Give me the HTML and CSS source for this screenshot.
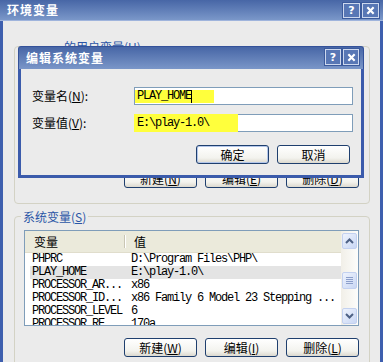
FILE: index.html
```html
<!DOCTYPE html>
<html lang="zh-CN">
<head>
<meta charset="utf-8">
<title>环境变量</title>
<link rel="stylesheet" href="styles.css">
</head>
<body>
<div class="win">
  <div class="titlebar">
    <span class="caption">环境变量</span>
    <div class="caps">
      <span class="cap">?</span>
      <span class="cap"><svg viewBox="0 0 10 10" width="9" height="9"><path d="M1.5 1.5 L8.5 8.5 M8.5 1.5 L1.5 8.5" stroke="#fff" stroke-width="2.4" fill="none"/></svg></span>
    </div>
  </div>
  <div class="client">
    <fieldset class="group user">
      <legend class="user-legend">的用户变量(<u>U</u>)</legend>
      <div class="gbody">
        <div class="ghost"></div>
        <div class="btnrow">
          <button class="btn">新建(<u>N</u>)</button>
          <button class="btn">编辑(<u>E</u>)</button>
          <button class="btn">删除(<u>D</u>)</button>
        </div>
      </div>
    </fieldset>
    <fieldset class="group sys">
      <legend>系统变量(<u>S</u>)</legend>
      <div class="gbody">
        <div class="listview">
          <div class="lv-main">
            <div class="lv-head">
              <span class="hc h1">变量</span>
              <span class="hdiv"></span>
              <span class="hc h2">值</span>
            </div>
            <div class="lv-row"><span class="c1">PHPRC</span><span class="c2">D:\Program Files\PHP\</span></div>
            <div class="lv-row sel"><span class="c1">PLAY_HOME</span><span class="c2">E:\play-1.0\</span></div>
            <div class="lv-row"><span class="c1">PROCESSOR_AR...</span><span class="c2">x86</span></div>
            <div class="lv-row"><span class="c1">PROCESSOR_ID...</span><span class="c2">x86 Family 6 Model 23 Stepping ...</span></div>
            <div class="lv-row"><span class="c1">PROCESSOR_LEVEL</span><span class="c2">6</span></div>
            <div class="lv-row"><span class="c1">PROCESSOR_RE...</span><span class="c2">170a</span></div>
          </div>
          <div class="vscroll">
            <span class="sbtn"><svg viewBox="0 0 9 6" width="9" height="6"><path d="M1 5 L4.5 1.5 L8 5" stroke="#4d6185" stroke-width="2" fill="none"/></svg></span>
            <span class="sthumb"><svg viewBox="0 0 7 8" width="7" height="8"><path d="M0 0.5H7M0 2.5H7M0 4.5H7M0 6.5H7" stroke="#8c9fcb" stroke-width="1"/></svg></span>
            <span class="sbtn down"><svg viewBox="0 0 9 6" width="9" height="6"><path d="M1 1 L4.5 4.5 L8 1" stroke="#4d6185" stroke-width="2" fill="none"/></svg></span>
          </div>
        </div>
        <div class="btnrow">
          <button class="btn">新建(<u>W</u>)</button>
          <button class="btn">编辑(<u>I</u>)</button>
          <button class="btn">删除(<u>L</u>)</button>
        </div>
      </div>
    </fieldset>
  </div>

  <div class="dialog">
    <div class="dlg-title">
      <span class="caption">编辑系统变量</span>
      <div class="caps dcaps">
        <span class="cap dcap">?</span>
        <span class="cap dcap"><svg viewBox="0 0 10 10" width="9" height="9"><path d="M1.5 1.5 L8.5 8.5 M8.5 1.5 L1.5 8.5" stroke="#fff" stroke-width="2.4" fill="none"/></svg></span>
      </div>
    </div>
    <div class="dlg-body">
      <div class="form">
        <label class="lbl">变量名(<u>N</u>):</label>
        <div class="field"><span class="mark m1">PLAY_HOME<span class="caret"></span></span></div>
        <label class="lbl">变量值(<u>V</u>):</label>
        <div class="field"><span class="mark m2">E:\play-1.0\</span></div>
      </div>
      <div class="btnrow dlg-btns">
        <button class="btn default">确定</button>
        <button class="btn">取消</button>
      </div>
    </div>
  </div>
</div>
</body>
</html>
```

FILE: styles.css
```css
* { box-sizing: border-box; }
html, body { margin: 0; padding: 0; }
body {
  width: 383px;
  height: 362px;
  overflow: hidden;
  background: #ebebeb;
  font-family: "Noto Sans CJK SC", sans-serif;
  font-size: 12px;
  color: #000;
}
u { text-decoration: underline; text-underline-offset: 1px; }

.win {
  position: relative;
  width: 383px;
  height: 362px;
  display: flex;
  flex-direction: column;
}

/* title bars */
.titlebar {
  height: 21px;
  flex: none;
  display: flex;
  align-items: center;
  justify-content: space-between;
  padding: 0 4px 0 7px;
  background: linear-gradient(#4766a6, #7a97c9);
  border-bottom: 1px solid #9fb4dc;
}
.caption {
  color: #fff;
  font-weight: bold;
  font-size: 12px;
  letter-spacing: 1px;
  line-height: 14px;
}
.caps { display: flex; gap: 2px; align-self: flex-start; padding-top: 3px; }
.cap {
  width: 17px;
  height: 15px;
  display: flex;
  align-items: center;
  justify-content: center;
  background: #5877b5;
  border: 1px solid #cdd8ee;
  box-shadow: 0 0 0 1px #3b5a9c;
  color: #fff;
  font-family: "DejaVu Sans", sans-serif;
  font-weight: bold;
  font-size: 11px;
  line-height: 1;
}

/* client area */
.client {
  flex: 1;
  background: #ebebeb;
  border-left: 3px solid #3e5fae;
  border-right: 3px solid #3e5fae;
  padding: 0 10px 0 11px;
}
.group {
  margin: 0;
  padding: 0;
  min-width: 0;
  border: 1px solid #d3d2c4;
  border-radius: 4px;
}
.group legend {
  margin-left: 6px;
  padding: 0 2px;
  line-height: 13px;
  font-size: 12px;
  color: #2a55a6;
}
.group.user { margin-top: 19px; }
.group.sys { margin-top: 6px; }
.group legend.user-legend { padding-left: 43px; }
.gbody { padding: 7px 10px 15px 9px; }
.ghost { height: 98px; }

.btnrow {
  display: flex;
  justify-content: flex-end;
  gap: 8px;
  margin-top: 11px;
}
.sys .btnrow { margin-top: 12px; }
.btn {
  width: 73px;
  height: 19px;
  padding: 0;
  border: 1px solid #1f3f6e;
  border-radius: 3px;
  background: linear-gradient(#ffffff, #f3f3ee 70%, #dcd9cf);
  font-family: "Noto Sans CJK SC", sans-serif;
  font-size: 12px;
  line-height: 15px;
  color: #000;
}
.btn.default {
  box-shadow: inset 0 0 0 1px #b3c6ea;
}

/* list view */
.listview {
  height: 96px;
  border: 1px solid #7f9db9;
  background: #fff;
  display: flex;
}
.lv-main { flex: 1; overflow: hidden; }
.lv-head {
  height: 22px;
  background: #ebeadb;
  border-bottom: 1px solid #e0ddcc;
  display: flex;
  align-items: center;
}
.hc { line-height: 13px; }
.h1 { width: 99px; padding-left: 9px; }
.hdiv {
  width: 1px;
  height: 13px;
  background: #c9c6b4;
  box-shadow: 1px 0 0 #fff;
}
.h2 { padding-left: 9px; }
.lv-row {
  height: 13px;
  margin-left: 5px;
  display: flex;
  font-family: "Liberation Mono", monospace;
  font-size: 12px;
  letter-spacing: -1.2px;
  line-height: 13px;
  white-space: pre;
}
.lv-row.sel { background: #e4e4e4; }
.c1 { width: 94px; padding-left: 2px; overflow: hidden; }
.c2 { padding-left: 7px; }

.vscroll {
  width: 17px;
  flex: none;
  background: linear-gradient(90deg, #f1efe8, #fdfdfb);
  display: flex;
  flex-direction: column;
  align-items: center;
  padding: 2px 0 1px;
}
.sbtn, .sthumb {
  width: 15px;
  height: 16px;
  border: 1px solid #c3d1f0;
  border-radius: 2px;
  background: linear-gradient(135deg, #eef3fd, #c9d7f4);
  display: flex;
  align-items: center;
  justify-content: center;
}
.sthumb { margin-top: 23px; height: 17px; }
.sbtn.down { margin-top: auto; }

/* dialog */
.dialog {
  position: absolute;
  left: 18px;
  top: 46px;
  width: 346px;
  height: 132px;
  display: flex;
  flex-direction: column;
}
.dlg-title {
  height: 23px;
  flex: none;
  display: flex;
  align-items: center;
  justify-content: space-between;
  padding: 0 4px 0 7px;
  background: linear-gradient(#4766a6, #7a96c8);
  border: 1px solid #34529a;
  border-bottom: 0;
  border-radius: 3px 3px 0 0;
}
.dcaps { padding-top: 2px; }
.dcap { width: 16px; height: 16px; }
.dlg-body {
  flex: 1;
  background: #ebebeb;
  border: 3px solid #3b5bab;
  border-top: 0;
  padding: 18px 8px 0 11px;
}
.form {
  display: grid;
  grid-template-columns: 102px 219px;
  grid-auto-rows: 18px;
  row-gap: 9px;
  align-items: center;
}
.lbl { line-height: 14px; color: #000; }
.field {
  height: 18px;
  border: 1px solid #7f9db9;
  background: #fff;
  display: flex;
  align-items: center;
  font-family: "Liberation Mono", monospace;
  font-size: 12px;
  letter-spacing: -1.2px;
  white-space: pre;
}
.mark {
  background: #ffff3c;
  display: flex;
  align-items: center;
  padding-left: 2px;
}
.m1 { width: 79px; height: 13px; }
.m2 { width: 104px; height: 18px; margin-left: -1px; padding-left: 3px; }
.caret {
  width: 1px;
  height: 13px;
  background: #000;
}
.dlg-btns { margin-top: 13px; padding-right: 3px; }
```
